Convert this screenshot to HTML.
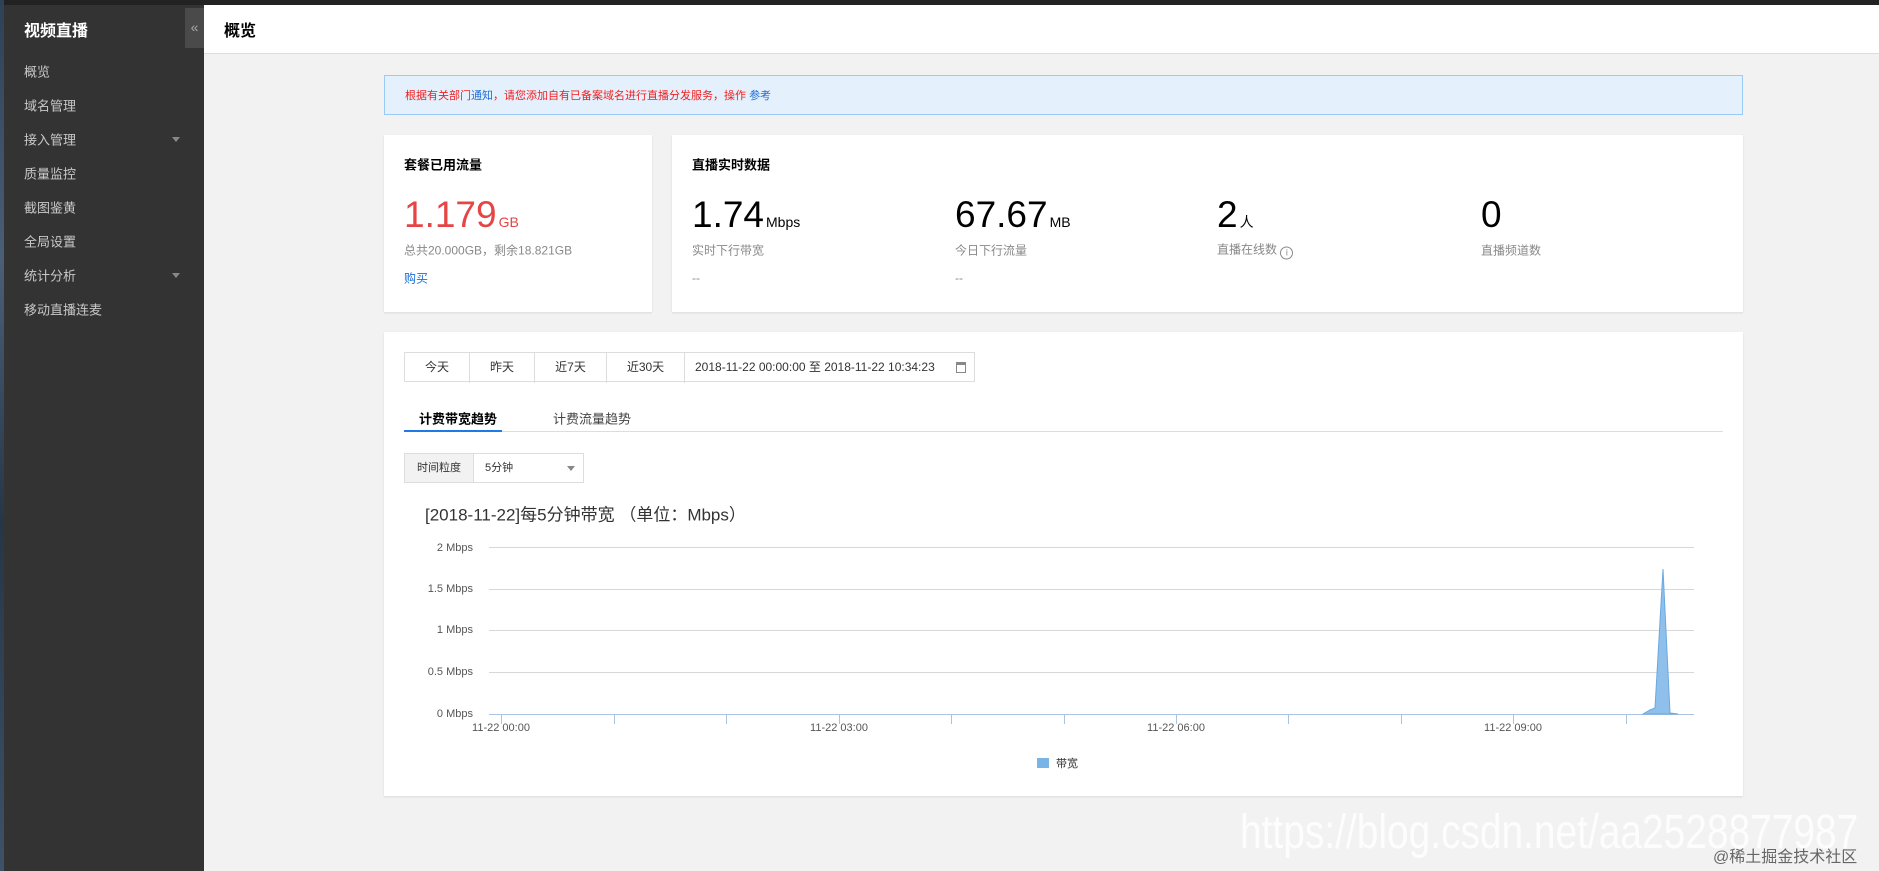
<!DOCTYPE html>
<html><head><meta charset="utf-8"><style>
*{margin:0;padding:0;box-sizing:border-box}
body{width:1879px;height:871px;overflow:hidden;background:#f2f2f2;font-family:"Liberation Sans","Noto Sans CJK SC",sans-serif;position:relative;color:#333}
.a{position:absolute;white-space:nowrap}
.topbar{left:0;top:0;width:1879px;height:5px;background:#222}
.strip{left:0;top:0;width:4px;height:871px;background:linear-gradient(#2e4256,#4a5f78 30%,#263646 60%,#3d5268)}
.side{left:4px;top:5px;width:200px;height:866px;background:#333}
.side .m{position:absolute;left:20px;color:#c8c8c8;font-size:13px;transform:translateY(-50%)}
.arr{position:absolute;left:168px;width:0;height:0;border-left:4px solid transparent;border-right:4px solid transparent;border-top:5px solid #888}
.card{background:#fff;box-shadow:0 1px 2px rgba(0,0,0,.1)}
.c{transform:translateY(-50%)}
.big{font-size:37px;color:#000}
.big small{font-size:14px;margin-left:2px}
.lbl{font-size:12px;color:#888}
.btn{position:absolute;top:0;height:30px;line-height:28px;text-align:center;font-size:12px;border-right:1px solid #ddd;color:#333}
.yl{font-size:11px;color:#555;width:60px;text-align:right}
.xl{font-size:11px;color:#555;width:100px;text-align:center;margin-left:-50px}
</style></head><body>
<div class="a topbar"></div>
<div class="a strip"></div>
<div class="a side">
 <div class="a c" style="left:20px;top:24px;color:#fff;font-weight:bold;font-size:16px">视频直播</div>
 <div class="a" style="left:181px;top:3px;width:19px;height:40px;background:#4a4a4a;color:#aaa;font-size:14px;text-align:center;line-height:38px">«</div>
 <div class="m" style="top:66px">概览</div>
 <div class="m" style="top:100px">域名管理</div>
 <div class="m" style="top:134px">接入管理</div><div class="arr" style="top:132px"></div>
 <div class="m" style="top:168px">质量监控</div>
 <div class="m" style="top:202px">截图鉴黄</div>
 <div class="m" style="top:236px">全局设置</div>
 <div class="m" style="top:270px">统计分析</div><div class="arr" style="top:268px"></div>
 <div class="m" style="top:304px">移动直播连麦</div>
</div>
<div class="a" style="left:204px;top:5px;width:1675px;height:49px;background:#fff;border-bottom:1px solid #ddd"></div>
<div class="a c" style="left:224px;top:29px;font-size:16px;font-weight:bold;color:#000">概览</div>

<div class="a" style="left:384px;top:75px;width:1359px;height:40px;background:#e5f0fd;border:1px solid #9ccaf6"></div>
<div class="a c" style="left:405px;top:95px;font-size:11px;color:#f02020">根据有关部门<span style="color:#1e6fd6">通知</span>，请您添加自有已备案域名进行直播分发服务，操作 <span style="color:#1e6fd6">参考</span></div>

<div class="a card" style="left:384px;top:135px;width:268px;height:177px"></div>
<div class="a c" style="left:404px;top:164px;font-size:13px;font-weight:bold;color:#000">套餐已用流量</div>
<div class="a c big" style="left:404px;top:215px;color:#e54545">1.179<small>GB</small></div>
<div class="a c lbl" style="left:404px;top:250px">总共20.000GB，剩余18.821GB</div>
<div class="a c" style="left:404px;top:278px;font-size:12px;color:#1e6fd6">购买</div>

<div class="a card" style="left:672px;top:135px;width:1071px;height:177px"></div>
<div class="a c" style="left:692px;top:164px;font-size:13px;font-weight:bold;color:#000">直播实时数据</div>
<div class="a c big" style="left:692px;top:215px">1.74<small>Mbps</small></div>
<div class="a c big" style="left:955px;top:215px">67.67<small>MB</small></div>
<div class="a c big" style="left:1217px;top:215px">2<small>人</small></div>
<div class="a c big" style="left:1481px;top:215px">0</div>
<div class="a c lbl" style="left:692px;top:250px">实时下行带宽</div>
<div class="a c lbl" style="left:955px;top:250px">今日下行流量</div>
<div class="a c lbl" style="left:1217px;top:250px">直播在线数 <span style="display:inline-block;width:13px;height:13px;border:1px solid #888;border-radius:50%;font-size:9px;text-align:center;line-height:11px;vertical-align:-2px">i</span></div>
<div class="a c lbl" style="left:1481px;top:250px">直播频道数</div>
<div class="a c lbl" style="left:692px;top:278px">--</div>
<div class="a c lbl" style="left:955px;top:278px">--</div>

<div class="a card" style="left:384px;top:332px;width:1359px;height:464px"></div>
<div class="a" style="left:404px;top:352px;width:571px;height:30px;border:1px solid #ddd">
 <div class="btn" style="left:0;width:65px">今天</div>
 <div class="btn" style="left:65px;width:65px">昨天</div>
 <div class="btn" style="left:130px;width:72px">近7天</div>
 <div class="btn" style="left:202px;width:78px">近30天</div>
 <div class="btn" style="left:280px;width:289px;border:none;text-align:left;padding-left:10px;font-size:12px">2018-11-22 00:00:00 至 2018-11-22 10:34:23</div>
 <div style="position:absolute;left:551px;top:9px;width:10px;height:11px;border:1px solid #888;border-top-width:3px"></div>
</div>
<div class="a c" style="left:419px;top:418px;font-size:13px;font-weight:bold;color:#000">计费带宽趋势</div>
<div class="a c" style="left:553px;top:418px;font-size:13px;color:#444">计费流量趋势</div>
<div class="a" style="left:404px;top:431px;width:1319px;height:1px;background:#ddd"></div>
<div class="a" style="left:404px;top:430px;width:98px;height:2px;background:#1e7ae6"></div>
<div class="a" style="left:404px;top:453px;width:180px;height:30px;border:1px solid #ddd;font-size:11px">
 <div style="position:absolute;left:0;top:0;width:69px;height:28px;background:#f2f2f2;border-right:1px solid #ddd;line-height:28px;text-align:center">时间粒度</div>
 <div style="position:absolute;left:80px;top:0;line-height:28px">5分钟</div>
 <div class="arr" style="left:162px;top:12px"></div>
</div>
<div class="a c" style="left:425px;top:513px;font-size:17px;color:#333">[2018-11-22]每5分钟带宽 （单位：Mbps）</div>

<svg class="a" style="left:0;top:0" width="1879" height="871">
 <g stroke="#d8d8d8" stroke-width="1">
  <line x1="489" y1="547.5" x2="1694" y2="547.5"/><line x1="489" y1="589.5" x2="1694" y2="589.5"/>
  <line x1="489" y1="630.5" x2="1694" y2="630.5"/><line x1="489" y1="672.5" x2="1694" y2="672.5"/>
 </g>
 <line x1="489" y1="714.5" x2="1694" y2="714.5" stroke="#aac4e0"/>
 <g stroke="#aac4e0"><line x1="501.5" y1="714" x2="501.5" y2="724"/><line x1="614.5" y1="714" x2="614.5" y2="724"/><line x1="726.5" y1="714" x2="726.5" y2="724"/><line x1="839.5" y1="714" x2="839.5" y2="724"/><line x1="951.5" y1="714" x2="951.5" y2="724"/><line x1="1064.5" y1="714" x2="1064.5" y2="724"/><line x1="1176.5" y1="714" x2="1176.5" y2="724"/><line x1="1288.5" y1="714" x2="1288.5" y2="724"/><line x1="1401.5" y1="714" x2="1401.5" y2="724"/><line x1="1513.5" y1="714" x2="1513.5" y2="724"/><line x1="1626.5" y1="714" x2="1626.5" y2="724"/></g>
 <path d="M1643 714 L1650 710 L1655 708 L1663 569 L1670 713 L1678 714 Z" fill="#8fc0ec" stroke="#6aa8e0" stroke-width="1"/>
 <rect x="1037" y="758" width="12" height="10" fill="#7ab3e6"/>
</svg>
<div class="a c yl" style="left:413px;top:548px">2 Mbps</div>
<div class="a c yl" style="left:413px;top:589px">1.5 Mbps</div>
<div class="a c yl" style="left:413px;top:630px">1 Mbps</div>
<div class="a c yl" style="left:413px;top:672px">0.5 Mbps</div>
<div class="a c yl" style="left:413px;top:714px">0 Mbps</div>
<div class="a c xl" style="left:501px;top:728px">11-22 00:00</div>
<div class="a c xl" style="left:839px;top:728px">11-22 03:00</div>
<div class="a c xl" style="left:1176px;top:728px">11-22 06:00</div>
<div class="a c xl" style="left:1513px;top:728px">11-22 09:00</div>
<div class="a c" style="left:1056px;top:763px;font-size:11px;color:#333">带宽</div>

<div class="a" style="left:1240px;top:805px;font-size:48px;color:rgba(255,255,255,.85);transform:scaleX(0.81);transform-origin:0 0">https://blog.csdn.net/aa2528877987</div>
<div class="a c" style="left:1713px;top:855px;font-size:16px;color:#666">@稀土掘金技术社区</div>
</body></html>
